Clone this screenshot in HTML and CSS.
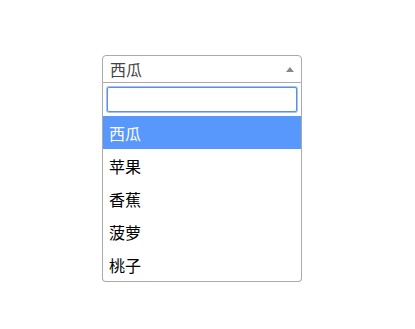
FILE: index.html
```html
<!DOCTYPE html>
<html lang="zh">
<head>
<meta charset="utf-8">
<link rel="stylesheet" href="styles.css">
</head>
<body>
<div class="select">
  <div class="selection">
    <span class="rendered">西瓜</span>
    <span class="arrow"><b></b></span>
  </div>
  <div class="dropdown">
    <div class="search"><input class="search-field" type="text" autofocus></div>
    <ul class="results">
      <li class="option highlighted">西瓜</li>
      <li class="option">苹果</li>
      <li class="option">香蕉</li>
      <li class="option">菠萝</li>
      <li class="option">桃子</li>
    </ul>
  </div>
</div>
</body>
</html>
```
FILE: styles.css
```css
html, body {
  margin: 0;
  padding: 0;
  background: #fff;
}
body {
  font-family: "Noto Sans CJK SC", "Microsoft YaHei", sans-serif;
  font-size: 16px;
}
.select {
  width: 200px;
  margin: 55px 0 0 102px;
  box-sizing: border-box;
}
.selection {
  position: relative;
  height: 28px;
  box-sizing: border-box;
  border: 1px solid #aaa;
  border-radius: 4px 4px 0 0;
  display: flex;
  align-items: center;
}
.rendered {
  color: #444;
  padding-left: 7px;
  line-height: 26px;
}
.arrow {
  position: absolute;
  top: 1px;
  right: 1px;
  width: 20px;
  height: 26px;
}
.arrow b {
  position: absolute;
  left: 50%;
  top: 50%;
  margin-left: -4px;
  margin-top: -3px;
  width: 0;
  height: 0;
  border-style: solid;
  border-width: 0 4px 5px 4px;
  border-color: transparent transparent #888 transparent;
}
.dropdown {
  border: 1px solid #aaa;
  border-top: none;
  border-radius: 0 0 4px 4px;
  overflow: hidden;
}
.search {
  padding: 4px;
}
.search-field {
  display: block;
  width: 100%;
  height: 25px;
  box-sizing: border-box;
  margin: 0;
  border: 1px solid #5d8fe6;
  border-radius: 2px;
  box-shadow: 0 0 0 1px rgba(93, 143, 230, 0.55);
  outline: none;
  padding: 4px;
  font: inherit;
}
.results {
  list-style: none;
  margin: 0;
  padding: 0;
}
.option {
  height: 33px;
  box-sizing: border-box;
  padding: 0 6px;
  display: flex;
  align-items: center;
  color: #000;
}
.highlighted {
  background: #5897fb;
  color: #fff;
}
```
